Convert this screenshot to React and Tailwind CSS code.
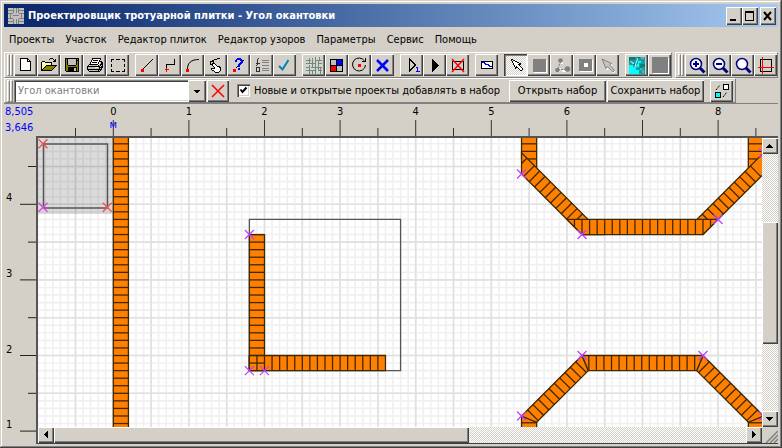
const SCALE = 75.6;
const ORANGE = '#ff8000';

/* World metres -> canvas pixels */
const X = (v) => 75.3 + SCALE * v;
const Y = (v) => 66.3 + SCALE * (4 - v);
const range = (from, to) => Array.from({ length: to - from + 1 }, (_, i) => from + i);
const pts = (list) => list.map(([x, y]) => `${X(x)},${Y(y)}`).join(' ');

const RAISED =
  'bg-[#d4d0c8] shadow-[inset_1px_1px_0_#fff,inset_-1px_-1px_0_#404040,inset_-2px_-2px_0_#808080]';
const TRACK =
  'bg-[conic-gradient(#fff_25%,#d4d0c8_0_50%,#fff_0_75%,#d4d0c8_0)] bg-[length:2px_2px]';
const BAR = 'flex items-center border-t border-l border-r border-b border-t-white border-l-white border-r-[#808080] border-b-[#808080] py-px';

function Glyph({ children, smooth }) {
  return (
    <svg width="23" height="22" viewBox="0 0 23 22" fill="none" shapeRendering={smooth ? 'auto' : 'crispEdges'} aria-hidden="true">
      {children}
    </svg>
  );
}

/* Draws a bitmap glyph from rows of palette keys */
const PALETTE = { k: '#000', w: '#fff', y: '#ffff66', o: '#808000', g: '#808080', r: '#ff0000', b: '#0000ff', l: '#c0c0c0' };
function Bitmap({ x, y, rows }) {
  return rows.flatMap((row, j) =>
    [...row].map((c, i) => (PALETTE[c] ? <rect key={`${j}-${i}`} x={x + i} y={y + j} width="1" height="1" fill={PALETTE[c]} /> : null)),
  );
}

const OPEN = [
  '.........kkk....',
  '........k...k.k.',
  '.............kk.',
  '.kkk........kkk.',
  'kywykkkkkkk.....',
  'kwywywywywk.....',
  'kywywywywyk.....',
  'kwywykkkkkkkkkkk',
  'kywykoooooooook.',
  'kwykoooooooook..',
  'kykoooooooook...',
  'kkoooooooook....',
  'kkkkkkkkkkk.....',
];
const SAVE = [
  'kkkkkkkkkkkkkk',
  'kokllllllllkok',
  'kokllllllllkkk',
  'kokllllllllkok',
  'kokllllllllkok',
  'kokllllllllkok',
  'kokllllllllkok',
  'kookkkkkkkkook',
  'kooooooooooook',
  'kookkkkkkkkkok',
  'kookkkkkkllkok',
  'kookkkkkkllkok',
  'kookkkkkkllkok',
  '.kkkkkkkkkkkkk',
];
const PRINT = [
  '.....kkkkkkkkk..',
  '.....kwwwwwwwk..',
  '....kwkkkkkwk...',
  '....kwwwwwwwkkk.',
  '...kwkkkkkwkwlkk',
  '...kwwwwwwwkwlkk',
  '..kkkkkkkkkwlkkk',
  '.kwlllllllwklklk',
  'kkkkkkkkkkkkklkk',
  'klllllllyyylkkkk',
  'klllllllllllklk.',
  'kkkkkkkkkkkkkkk.',
  '.klllllllllklk..',
  '..kkkkkkkkkkk...',
];
const HAND = [
  '.......kkk.',
  '....kkk....',
  '..kk.......',
  'kkkk.......',
  'k..k.......',
  'k.kkk......',
  'kkkwwk.....',
  '..kwwwk....',
  '...kwwwkkk.',
  '....kwwwwkk',
  '.kkkkwwwwwk',
  '.kwwwwwwwwk',
  '..kkwwwwwwk',
  '....kwwwwk.',
  '.....kkkk..',
];
const QUESTION = [
  '..bbbb..',
  '.bbbbbb.',
  'bb...bbb',
  'bb....bb',
  '.....bbb',
  '....bbb.',
  '...bbb..',
  '...bb...',
  '...bb...',
  '........',
  '...bb...',
  '...bb...',
];
const ARROW = [
  'kk..........',
  'kwkk........',
  '.kwwkk......',
  '.kwwwwkk....',
  '..kwwwwwkk..',
  '..kwwwwkkk..',
  '...kwwwwk...',
  '...kwkwwwk..',
  '....kkkwwwk.',
  '....k..kwwwk',
  '........kwwk',
  '.........kk.',
];

const icons = {
  new: (
    <Glyph>
      <path d="M6.500 4.500h7l3 3v9h-10z" fill="#fff" stroke="#000" />
      <path d="M13.500 4.500v3h3" stroke="#000" />
    </Glyph>
  ),
  open: <Glyph><Bitmap x={4} y={4} rows={OPEN} /></Glyph>,
  save: <Glyph><Bitmap x={5} y={4} rows={SAVE} /></Glyph>,
  print: <Glyph><Bitmap x={4} y={4} rows={PRINT} /></Glyph>,
  frame: (
    <Glyph>
      <path d="M5.500 5v3M5.500 10v3M5.500 15v2.500M18.500 5v3M18.500 10v3M18.500 15v2.500M5 5.500h3M10 5.500h4M16 5.500h3M5 17.500h3M10 17.500h4M16 17.500h3" stroke="#000" />
    </Glyph>
  ),
  line: (
    <Glyph>
      <path d="M7 16L18 5" stroke="#000" shapeRendering="auto" />
      <rect x="6" y="15" width="3" height="3" fill="red" />
    </Glyph>
  ),
  poly: (
    <Glyph>
      <path d="M8.500 15V10.500H16.500V5" stroke="#000" />
      <path d="M8.500 14v4M7 15.500h4" stroke="red" />
    </Glyph>
  ),
  arc: (
    <Glyph>
      <path d="M6.500 15C6.500 9 10 5.500 18 5.500" stroke="#000" shapeRendering="auto" />
      <rect x="5" y="15" width="3" height="3" fill="red" />
    </Glyph>
  ),
  pick: <Glyph><Bitmap x={6} y={4} rows={HAND} /></Glyph>,
  ask: (
    <Glyph>
      <path d="M7 16L18 5" stroke="#000" strokeDasharray="2 1" />
      <Bitmap x={8} y={4} rows={QUESTION} />
      <rect x="6" y="15" width="3" height="3" fill="red" />
    </Glyph>
  ),
  list: (
    <Glyph>
      <path d="M12 6.500h7M12 8.500h7M12 11.500h7M12 14.500h7M12 16.500h7" stroke="#808080" />
      <path d="M9 4.500L7 6v3M6 9.500h3l-3 2M6 13.500h3v4H6z" stroke="#303030" />
    </Glyph>
  ),
  check: (
    <Glyph smooth>
      <path d="M6 12l3.500 3.500L15.500 6" stroke="#0080c0" strokeWidth="2" />
    </Glyph>
  ),
  weave: (
    <Glyph>
      <rect x="4" y="3" width="16" height="17" fill="#c8dccb" />
      <path d="M4 6.500h5M13 6.500h7M4 9.500h9M16 9.500h4M4 13.500h3M9 13.500h11M4 16.500h9M16 16.500h4M7.500 4v5M10.500 4v9M10.500 16v4M13.500 3v10M16.500 7v9M7.500 11v9M13.500 14v6M17.500 3v3M18.500 14v6" stroke="#808080" />
    </Glyph>
  ),
  colors: (
    <Glyph>
      <rect x="5" y="5" width="13" height="13" fill="#000" />
      <rect x="6" y="6" width="5" height="5" fill="#c0c0c0" />
      <rect x="12" y="6" width="5" height="5" fill="#0000ff" />
      <rect x="6" y="12" width="5" height="5" fill="#ff0000" />
      <rect x="12" y="12" width="5" height="5" fill="#c0c0c0" />
    </Glyph>
  ),
  rotate: (
    <Glyph>
      <path d="M16.500 7A6.500 6.500 0 1 0 17.500 11" stroke="#000" shapeRendering="auto" />
      <path d="M14 7.500h3.500V4" stroke="#000" />
      <rect x="10" y="10" width="3" height="3" fill="red" />
    </Glyph>
  ),
  cross: (
    <Glyph smooth>
      <path d="M6 6L17 17M17 6L6 17" stroke="#0000ff" strokeWidth="2.500" />
    </Glyph>
  ),
  step: (
    <Glyph>
      <path d="M9.500 5v12L15.500 11z" stroke="#000" />
      <path d="M16 13.500h1.500V18M16 17.500h4" stroke="#0000ff" />
    </Glyph>
  ),
  play: (
    <Glyph>
      <path d="M9 5v13L16 11.500z" fill="#000" />
    </Glyph>
  ),
  erase: (
    <Glyph>
      <rect x="6.500" y="7.500" width="11" height="8" fill="#d4d0c8" stroke="#000" />
      <path d="M6 5L18 18M18 5L6 18" stroke="red" strokeWidth="1.500" shapeRendering="auto" />
    </Glyph>
  ),
  card: (
    <Glyph>
      <rect x="6.500" y="7.500" width="11" height="7" fill="#fff" stroke="#000" />
      <path d="M7 8.500h2l2 2h2l2 2h2" stroke="#0000ff" />
    </Glyph>
  ),
  arrow: <Glyph><Bitmap x={7} y={5} rows={ARROW} /></Glyph>,
  block: (
    <Glyph>
      <rect x="7" y="6" width="13" height="13" fill="#fff" />
      <rect x="6" y="5" width="13" height="13" fill="#808080" />
    </Glyph>
  ),
  nodes: (
    <Glyph smooth>
      <path d="M12 8v2M10 14l-1 4M12 17h4" stroke="#fff" strokeWidth="2" />
      <path d="M10.500 7L8 15.500h9" stroke="#808080" strokeDasharray="2 1" />
      <circle cx="10.500" cy="6.500" r="2.300" fill="#808080" />
      <circle cx="7.500" cy="16" r="2.300" fill="#808080" />
      <circle cx="17.500" cy="15" r="2.800" fill="#808080" />
    </Glyph>
  ),
  hole: (
    <Glyph>
      <rect x="7" y="6" width="13" height="12" fill="#fff" />
      <rect x="6" y="5" width="13" height="12" fill="#808080" />
      <rect x="11" y="9" width="4" height="4" fill="#fff" />
    </Glyph>
  ),
  pointer: (
    <Glyph smooth>
      <path d="M7 6l9 5-2 1 5 5.500-2 1.500-5-5-1 2z" stroke="#fff" />
      <path d="M6 5l9.500 4.500-2 1.500 5 5.500-2 1.500-5-5.500-1.500 2z" fill="#c8c5be" stroke="#808080" />
    </Glyph>
  ),
  texture: (
    <Glyph>
      <rect x="4" y="3" width="16" height="17" fill="#10a0a8" />
      <path d="M4 11h4v2h3v3h3v4H4zM13 7h3v2h-2v4h-2z" fill="#00ffff" />
      <path d="M4 3h6v3H6v2H4zM15 10h5v3h-3v2h-2zM12 3h3v2h-3zM8 9h3v2H8z" fill="#008080" />
      <path d="M7 8h2v2H7zM16 3h3v2h-3zM10 11h2v3h-2zM17 16h2v3h-2zM15 14h2v2h-2z" fill="#60b0b0" />
      <path d="M13 4l-2 5-1 4M5 7l4 3" stroke="#d0f0f0" shapeRendering="auto" />
    </Glyph>
  ),
  fill: (
    <Glyph>
      <rect x="5" y="4" width="16" height="16" fill="#fff" />
      <rect x="4" y="3" width="16" height="16" fill="#808080" />
    </Glyph>
  ),
  zoomIn: <Lens><path d="M8 10h6M11 7v6" /></Lens>,
  zoomOut: <Lens><path d="M8 10h6" /></Lens>,
  zoomAll: <Lens />,
  crop: (
    <Glyph>
      <rect x="6.500" y="5.500" width="11" height="12" stroke="#000" />
      <path d="M8.500 3v17M4 13.500h16" stroke="red" />
    </Glyph>
  ),
};

function Lens({ children }) {
  return (
    <Glyph smooth>
      <path d="M15 14l4.500 4.500" stroke="#000080" strokeWidth="3" />
      <circle cx="11" cy="10" r="5.500" fill="#fff" stroke="#000080" strokeWidth="1.500" />
      <g stroke="#000080" strokeWidth="2">{children}</g>
    </Glyph>
  );
}

const GROUPS = [
  [['new', 'Новый'], ['open', 'Открыть'], ['save', 'Сохранить'], ['print', 'Печать'], ['frame', 'Область']],
  [['line', 'Линия'], ['poly', 'Ломаная'], ['arc', 'Дуга'], ['pick', 'Выбор'], ['ask', 'Справка'], ['list', 'Список'], ['check', 'Применить']],
  [['weave', 'Узор'], ['colors', 'Цвета'], ['rotate', 'Поворот'], ['cross', 'Удалить']],
  [['step', 'Шаг'], ['play', 'Пуск'], ['erase', 'Очистить']],
  [['card', 'Лист']],
  [['arrow', 'Указатель'], ['block', 'Блок'], ['nodes', 'Узлы'], ['hole', 'Вырез'], ['pointer', 'Перенос']],
  [['texture', 'Текстура'], ['fill', 'Заливка']],
];
const VIEW_TOOLS = [['zoomIn', 'Увеличить'], ['zoomOut', 'Уменьшить'], ['zoomAll', 'Показать всё'], ['crop', 'Обрезка']];
const MENU = ['Проекты', 'Участок', 'Редактор плиток', 'Редактор узоров', 'Параметры', 'Сервис', 'Помощь'];

function Tool({ name, label }) {
  const pressed = name === 'arrow';
  return (
    <button
      type="button"
      aria-label={label}
      aria-pressed={pressed}
      className={
        pressed
          ? `block h-[22px] w-[23px] shadow-[inset_1px_1px_0_#404040,inset_2px_2px_0_#808080,inset_-1px_-1px_0_#fff] ${TRACK}`
          : `block h-[22px] w-[23px] ${RAISED}`
      }
    >
      {icons[name]}
    </button>
  );
}

function Grip() {
  const ridge = 'h-[22px] w-[3px] border border-t-white border-l-white border-r-[#808080] border-b-[#808080]';
  return (
    <div className="flex shrink-0 pr-px pl-0.5">
      <div className={ridge} />
      <div className={ridge} />
    </div>
  );
}

function WindowButton({ label, children }) {
  return (
    <button type="button" aria-label={label} className={`h-[18px] w-4 ${RAISED}`}>
      <svg width="16" height="18" fill="none" stroke="#000" shapeRendering="crispEdges" aria-hidden="true">{children}</svg>
    </button>
  );
}

function ScrollButton({ label, path }) {
  return (
    <button type="button" aria-label={label} className={`size-4 shrink-0 ${RAISED}`}>
      <svg width="16" height="16" shapeRendering="crispEdges" aria-hidden="true"><path d={path} /></svg>
    </button>
  );
}

function Cross({ at: [x, y], color = '#c040ff' }) {
  const cx = X(x);
  const cy = Y(y);
  return <path d={`M${cx - 4.5} ${cy - 4.5}l9 9m0 -9l-9 9`} stroke={color} strokeWidth="1.3" />;
}

/* Tile joints across a run: from start, every 0.1 m along dir, spanning the vector across */
function Joints({ start, dir, across, from = 0, count }) {
  return range(from, count).map((i) => {
    const x = start[0] + dir[0] * i * 0.1;
    const y = start[1] + dir[1] * i * 0.1;
    return <line key={i} x1={X(x)} y1={Y(y)} x2={X(x + across[0])} y2={Y(y + across[1])} />;
  });
}

const D = Math.SQRT1_2;

function Drawing() {
  return (
    <svg className="block size-full bg-white" fill="none" aria-label="План участка">
      <g stroke="#f0f0f0" strokeWidth="1.600">
        {range(-10, 300).map((i) => <line key={`v${i}`} x1={X(i / 10)} x2={X(i / 10)} y1="0" y2="100%" />)}
        {range(-150, 50).map((i) => <line key={`h${i}`} y1={Y(i / 10)} y2={Y(i / 10)} x1="0" x2="100%" />)}
      </g>
      <g stroke="#e0e0e0" strokeWidth="1.600">
        {range(-1, 60).map((i) => <line key={`v${i}`} x1={X(i / 2)} x2={X(i / 2)} y1="0" y2="100%" />)}
        {range(-30, 10).map((i) => <line key={`h${i}`} y1={Y(i / 2)} y2={Y(i / 2)} x1="0" x2="100%" />)}
      </g>

      <rect width="76" height="76" fill="#000" fillOpacity="0.14" />
      <rect x="5.500" y="6" width="64" height="64" stroke="#555" strokeWidth="1.500" />
      <Cross at={[-0.93, 4.8]} color="#f05050" />
      <Cross at={[-0.08, 3.96]} color="#f05050" />
      <Cross at={[-0.93, 3.96]} color="#e040e0" />

      <g fill={ORANGE} stroke="#402800" strokeWidth="1.300">
        <polygon points={pts([[0, 5], [0.2, 5], [0.2, -15], [0, -15]])} />
        <Joints start={[0, 4.8]} dir={[0, -1]} across={[0.2, 0]} count={190} />

        <polygon points={pts([[1.8, 3.8], [3.8, 3.8], [3.8, 1.8], [1.8, 1.8]])} fill="none" stroke="#555" />
        <polygon points={pts([[1.8, 3.6], [2, 3.6], [2, 1.8], [1.8, 1.8]])} />
        <polygon points={pts([[1.8, 2], [3.6, 2], [3.6, 1.8], [1.8, 1.8]])} />
        <Joints start={[1.8, 3.6]} dir={[0, -1]} across={[0.2, 0]} count={17} />
        <Joints start={[1.8, 2]} dir={[1, 0]} across={[0, -0.2]} count={17} />

        <polygon points={pts([[5.4, 5], [5.6, 5], [5.6, 4.48], [5.4, 4.6]])} />
        <Joints start={[5.4, 4.8]} dir={[0, -1]} across={[0.2, 0]} count={2} />
        <polygon points={pts([[8.4, 5], [8.6, 5], [8.6, 4.48], [8.4, 4.48]])} />
        <Joints start={[8.4, 4.8]} dir={[0, -1]} across={[0.2, 0]} count={2} />
        <polygon points={pts([[5.4, 4.68], [5.4, 4.4], [6.2, 3.6], [6.48, 3.6]])} />
        <Joints start={[5.43, 4.37]} dir={[D, -D]} across={[0.2 * D, 0.2 * D]} count={10} />
        <line x1={X(5.4)} y1={Y(4.54)} x2={X(5.47)} y2={Y(4.61)} />
        <polygon points={pts([[7.6, 3.68], [8.6, 4.68], [8.6, 4.4], [7.8, 3.6]])} />
        <Joints start={[7.93, 3.73]} dir={[D, D]} across={[-0.2 * D, 0.2 * D]} count={9} />
        <polygon points={pts([[6, 3.8], [8, 3.8], [7.8, 3.6], [6.2, 3.6]])} />
        <Joints start={[6.2, 3.8]} dir={[1, 0]} across={[0, -0.2]} count={16} />
        <path d={`M${X(6.1)} ${Y(3.8)}v7.500M${X(7.9)} ${Y(3.8)}v7.500`} />

        <polygon points={pts([[5.4, 1.2], [5.6, 1.12], [5.6, -9], [5.4, -9]])} />
        <Joints start={[5.4, 1.11]} dir={[0, -1]} across={[0.2, 0]} count={100} />
        <polygon points={pts([[8.4, 1.12], [8.6, 1.2], [8.6, -9], [8.4, -9]])} />
        <Joints start={[8.4, 1.11]} dir={[0, -1]} across={[0.2, 0]} count={100} />
        <polygon points={pts([[5.4, 1.2], [6.2, 2], [6.283, 1.8], [5.6, 1.117]])} />
        <Joints start={[5.48, 1.28]} dir={[D, D]} across={[0.2 * D, -0.2 * D]} count={9} />
        <polygon points={pts([[8.6, 1.2], [7.8, 2], [7.717, 1.8], [8.4, 1.117]])} />
        <Joints start={[8.52, 1.28]} dir={[-D, D]} across={[-0.2 * D, -0.2 * D]} count={9} />
        <polygon points={pts([[6.2, 2], [7.8, 2], [7.717, 1.8], [6.283, 1.8]])} />
        <Joints start={[6.29, 2]} dir={[1, 0]} across={[0, -0.2]} count={14} />
      </g>

      {[[1.8, 3.6], [1.8, 1.8], [2, 1.8], [5.4, 4.4], [6.2, 3.6], [8, 3.8], [8.6, 4.68], [6.2, 2], [7.8, 2], [5.4, 1.2], [8.6, 1.2]].map((p) => (
        <Cross key={p.join()} at={p} />
      ))}
    </svg>
  );
}

function TopRuler() {
  return (
    <svg className="block h-8 w-full text-[11px]" stroke="#333" aria-label="Горизонтальная линейка">
      {range(0, 18).map((i) => {
        const x = X((i - 1) / 2) + 2;
        return <line key={i} x1={x} x2={x} y1={i % 2 ? 16 : 24} y2="32" />;
      })}
      {range(0, 8).map((n) => (
        <text key={n} x={X(n) + 2} y="11" textAnchor="middle" stroke="none">{n}</text>
      ))}
      <text x={X(0) + 2} y="24" textAnchor="middle" stroke="none" fill="#0000ff">м</text>
    </svg>
  );
}

function SideRuler() {
  return (
    <svg className="block h-full w-8 text-[11px]" stroke="#222" aria-label="Вертикальная линейка">
      {range(2, 9).map((i) => {
        const y = Y(i / 2) + 2;
        return <line key={i} x1={i % 2 ? 24 : 16} x2="32" y1={y} y2={y} />;
      })}
      {range(1, 4).map((n) => (
        <text key={n} x="2" y={Y(n) - 1} stroke="none">{n}</text>
      ))}
    </svg>
  );
}

export default function App() {
  return (
    <div className='flex h-screen flex-col overflow-hidden bg-[#d4d0c8] p-1 font-["DejaVu_Sans_Condensed","DejaVu_Sans",sans-serif] text-[11px] leading-4 text-black shadow-[inset_-1px_-1px_0_#404040,inset_1px_1px_0_#d4d0c8,inset_-2px_-2px_0_#808080,inset_2px_2px_0_#fff]'>
      <header className="flex h-[23px] shrink-0 items-center gap-1 bg-linear-to-r from-[#0a246a] to-[#a6caf0] pr-0.5 pl-1">
        <svg width="16" height="16" shapeRendering="crispEdges" aria-hidden="true">
          <rect width="16" height="16" fill="#c0c0c0" />
          <path d="M0 2.500h5M0 5.500h5M5.500 0v5M8.500 0v5M11 2.500h5M11 5.500h5M0 10.500h5M0 13.500h5M5.500 11v5M8.500 11v5M11 10.500h5M11 13.500h5M2.500 6v4M13.500 6v4M5 7.500h6M10.500 0v5M10.500 11v5" stroke="#808080" />
        </svg>
        <h1 className="flex-1 truncate font-bold text-white">Проектировщик тротуарной плитки - Угол окантовки</h1>
        <div className="flex shrink-0">
          <WindowButton label="Свернуть"><path d="M4 13h6" strokeWidth="2" /></WindowButton>
          <WindowButton label="Развернуть"><path d="M3 5h9" strokeWidth="2" /><path d="M3.500 4v9.500h8V4" /></WindowButton>
        </div>
        <div className="-ml-0.5 flex shrink-0">
          <WindowButton label="Закрыть"><path d="M4 5l7 8M11 5l-7 8" strokeWidth="2" shapeRendering="auto" /></WindowButton>
        </div>
      </header>

      <nav className="flex h-[25px] shrink-0 items-center gap-[11px] px-[5px]">
        {MENU.map((item) => (
          <button key={item} type="button" className="whitespace-nowrap">{item}</button>
        ))}
      </nav>

      <div className="flex h-[26px] shrink-0 justify-between">
        <div role="toolbar" aria-label="Инструменты" className={BAR}>
          <Grip />
          <div className="flex gap-1.5">
            {GROUPS.map((group) => (
              <div key={group[0][0]} className="flex">
                {group.map(([name, label]) => <Tool key={name} name={name} label={label} />)}
              </div>
            ))}
          </div>
        </div>
        <div role="toolbar" aria-label="Масштаб" className={BAR}>
          <Grip />
          <div className="flex">
            {VIEW_TOOLS.map(([name, label]) => <Tool key={name} name={name} label={label} />)}
          </div>
        </div>
      </div>

      <div className="flex h-[26px] shrink-0 border-b border-[#808080]">
        <form className={`${BAR} pr-0.5`} onSubmit={(e) => e.preventDefault()}>
          <Grip />
          <div className="relative">
            <select
              aria-label="Проект"
              className="block h-[22px] w-48 appearance-none bg-white pr-5 pl-1 text-[#808080] shadow-[inset_1px_1px_0_#808080,inset_2px_2px_0_#404040,inset_-1px_-1px_0_#fff,inset_-2px_-2px_0_#d4d0c8]"
            >
              <option>Угол окантовки</option>
            </select>
            <span className={`pointer-events-none absolute inset-y-0 right-0 w-[18px] ${RAISED}`}>
              <svg width="18" height="22" shapeRendering="crispEdges" aria-hidden="true"><path d="M5 10h7L8.500 13.500z" /></svg>
            </span>
          </div>
          <button type="button" aria-label="Удалить проект" className={`ml-px h-[22px] w-[22px] ${RAISED}`}>
            <svg width="22" height="22" aria-hidden="true"><path d="M5 5l12 12M17 5L5 17" stroke="red" strokeWidth="1.500" /></svg>
          </button>
          <label className="ml-2 flex w-[272px] items-center gap-1 whitespace-nowrap">
            <input
              type="checkbox"
              defaultChecked
              className="peer size-[13px] shrink-0 appearance-none bg-white shadow-[inset_1px_1px_0_#808080,inset_2px_2px_0_#404040,inset_-1px_-1px_0_#fff,inset_-2px_-2px_0_#d4d0c8]"
            />
            <svg className="pointer-events-none -ml-[17px] hidden size-[13px] shrink-0 peer-checked:block" aria-hidden="true">
              <path d="M3.500 5.500l2 2.500 4-4.500" fill="none" stroke="#000" strokeWidth="2" />
            </svg>
            Новые и открытые проекты добавлять в набор
          </label>
          <button type="button" className={`h-[22px] w-[97px] whitespace-nowrap ${RAISED}`}>Открыть набор</button>
          <button type="button" className={`ml-px h-[22px] w-[97px] whitespace-nowrap ${RAISED}`}>Сохранить набор</button>
          <button type="button" aria-label="Связи" className={`ml-1.5 h-[22px] w-[23px] ${RAISED}`}>
            <Glyph>
              <rect x="13.500" y="4.500" width="5" height="5" fill="#fff" stroke="#000" />
              <rect x="5.500" y="12.500" width="5" height="5" fill="#00ffff" stroke="#000" />
              <path d="M6 10l4-5M13 17l4-5" stroke="#000" strokeDasharray="2 1" shapeRendering="auto" />
            </Glyph>
          </button>
        </form>
      </div>

      <main className="grid min-h-0 flex-1 grid-cols-[32px_1fr] grid-rows-[32px_1fr]">
        <output className="px-px text-[#0000ff]">
          <span className="block">8,505</span>
          <span className="block">3,646</span>
        </output>
        <TopRuler />
        <div className="min-h-0 overflow-hidden"><SideRuler /></div>
        <div className="grid min-h-0 min-w-0 grid-cols-[1fr_16px] grid-rows-[1fr_16px] border-t-2 border-b border-l-2 border-t-[#555] border-b-[#404040] border-l-[#555]">
          <div className="min-h-0 min-w-0 overflow-hidden"><Drawing /></div>
          <div className={`flex min-h-0 flex-col ${TRACK}`}>
            <ScrollButton label="Вверх" path="M4 10h7L7.500 6z" />
            <div className="flex-[68]" />
            <div className={`flex-[122] ${RAISED}`} />
            <div className="flex-[67]" />
            <ScrollButton label="Вниз" path="M4 6h7L7.500 10z" />
          </div>
          <div className={`flex min-w-0 ${TRACK}`}>
            <ScrollButton label="Влево" path="M10 4v7L6 7.500z" />
            <div className={`flex-[415] ${RAISED}`} />
            <div className="flex-[277]" />
            <ScrollButton label="Вправо" path="M6 4v7L10 7.500z" />
          </div>
          <svg width="16" height="16" className="bg-[#d4d0c8]" aria-hidden="true">
            <path d="M4 16L16 4M8 16l8-8M12 16l4-4" stroke="#808080" strokeWidth="1.500" />
          </svg>
        </div>
      </main>
    </div>
  );
}
